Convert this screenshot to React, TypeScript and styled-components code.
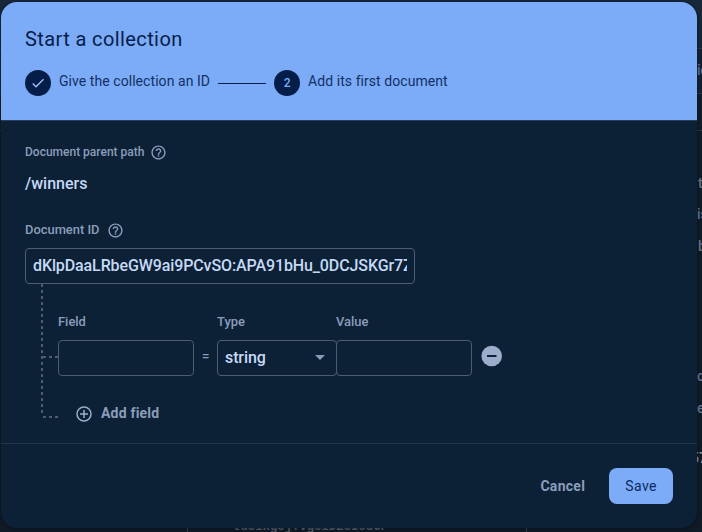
import React from "react";
import styled, { createGlobalStyle } from "styled-components";

const GlobalStyle = createGlobalStyle`
  * { box-sizing: border-box; }
  body { margin: 0; overflow: hidden; background: #101a28; font-family: Roboto, sans-serif; }
  button, input { font-family: inherit; }
`;

const Page = styled.div`
  position: relative;
  width: 702px;
  height: 532px;
  overflow: hidden;
  background: #101b28;
`;

const Backdrop = styled.div`
  display: flex;
  flex-direction: column;
  height: 532px;
`;

const Band = styled.div<{ $height: number; $tone: string }>`
  flex: none;
  height: ${(p) => p.$height}px;
  background: ${(p) => p.$tone};
  border-bottom: 1px solid #2c3744;
`;

const Listing = styled.div`
  flex: 1;
  display: grid;
  grid-template-columns: 188px 339px 1fr;
`;

const Column = styled.div`
  display: flex;
  flex-direction: column;
  justify-content: flex-end;
  border-right: 1px solid #37414d;
  &:last-child { border: 0; }
`;

const Entry = styled.div`
  margin-bottom: -2px;
  padding-left: 45px;
  font: 700 12.3px/14px "Liberation Mono", monospace;
  color: #566170;
  white-space: nowrap;
`;

const Peek = styled.span<{ $x: number; $y: number; $color?: string }>`
  position: absolute;
  left: ${(p) => p.$x}px;
  top: ${(p) => p.$y}px;
  font-size: 14px;
  font-weight: 500;
  line-height: 20px;
  white-space: nowrap;
  color: ${(p) => p.$color ?? "#62788f"};
`;

const Dialog = styled.section`
  position: absolute;
  left: 1px;
  top: 2px;
  width: 696px;
  height: 526px;
  display: flex;
  flex-direction: column;
  border-radius: 16px;
  overflow: hidden;
  background: #0c2135;
  color: #c6d9f5;
  box-shadow: 0 1px 5px rgba(0, 0, 0, 0.4);
`;

const Header = styled.header`
  flex: none;
  height: 119px;
  padding: 25px 24px 0;
  background: #7cabf8;
  border-bottom: 1px solid #263e5b;
  color: #041e49;
`;

const Title = styled.h2`
  margin: 0;
  font: 400 20px/24px Roboto, sans-serif;
  letter-spacing: 0.4px;
`;

const Steps = styled.div`
  display: flex;
  align-items: center;
  margin-top: 19px;
  height: 26px;
`;

const StepMark = styled.span`
  display: flex;
  align-items: center;
  justify-content: center;
  width: 26px;
  height: 26px;
  border-radius: 50%;
  background: #041e49;
  color: #7cabf8;
  font-size: 12px;
  font-weight: 500;
`;

const StepLabel = styled.span`
  margin: -5px 8px 0;
  font-size: 14px;
  line-height: 20px;
  letter-spacing: 0.06px;
  color: #123163;
`;

const StepLine = styled.span`
  width: 48px;
  height: 1px;
  margin-right: 8px;
  background: #041e49;
`;

const Body = styled.div`
  flex: none;
  height: 322px;
  padding: 21px 24px 0;
`;

const Label = styled.div<{ $size?: number }>`
  display: flex;
  align-items: center;
  height: 20px;
  gap: 7px;
  padding-bottom: 2px;
  font-size: ${(p) => p.$size ?? 12.9}px;
  font-weight: 500;
  color: #8b9dbb;

  svg { position: relative; top: 1px; }
`;

const PathLabel = styled(Label)`
  gap: 6px;
  padding-bottom: 0;

  svg { top: 0; }
`;

const PathValue = styled.div`
  margin: 12px 0 26px;
  font-size: 16px;
  font-weight: 500;
  line-height: 20px;
`;

const TextInput = styled.input<{ $width: number }>`
  display: block;
  width: ${(p) => p.$width}px;
  height: 36px;
  padding: 0 7px 2px;
  border: 1px solid #4b5c74;
  border-radius: 4px;
  outline: 0;
  background: transparent;
  color: #c6d9f5;
  font-size: 16px;
  font-weight: 500;
  letter-spacing: -0.11px;
`;

const IdInput = styled(TextInput)`
  margin-top: 8px;
`;

const Tree = styled.div`
  display: grid;
  grid-template-columns: 33px 1fr;
  height: 134px;
`;

const Branch = styled.svg`
  display: block;
  width: 33px;
  height: 136px;
`;

const FieldRow = styled.div`
  display: grid;
  grid-template-columns: 136px 23px 119px 136px 1fr;
  grid-template-rows: 20px 36px;
  row-gap: 8px;
  padding-top: 28px;
`;

const Equals = styled.span`
  display: flex;
  align-items: center;
  justify-content: center;
  padding-bottom: 4px;
  font-size: 14px;
  color: #8b9dbb;
`;

const Select = styled.button`
  display: flex;
  align-items: center;
  justify-content: space-between;
  width: 120px;
  height: 36px;
  padding: 0 10px 2px 7px;
  border: 1px solid #4b5c74;
  border-radius: 4px;
  background: transparent;
  color: #c6d9f5;
  font-size: 16px;
  font-weight: 500;
  letter-spacing: -0.1px;
`;

const RemoveButton = styled.button`
  display: flex;
  align-items: center;
  height: 32px;
  padding: 0 0 0 7px;
  border: 0;
  background: transparent;
`;

const AddButton = styled.button`
  display: flex;
  align-items: center;
  gap: 8px;
  height: 24px;
  margin-top: 25px;
  padding: 0 0 0 17px;
  border: 0;
  background: transparent;
  color: #8b9dbb;
  font-size: 14px;
  font-weight: 700;
  letter-spacing: 0.2px;

  svg { position: relative; top: 1px; }
`;

const Footer = styled.footer`
  flex: 1;
  display: flex;
  justify-content: flex-end;
  align-items: center;
  gap: 8px;
  padding: 0 24px;
  border-top: 1px solid #1e344a;
`;

const Action = styled.button<{ $primary?: boolean }>`
  height: 36px;
  padding: 0 16px;
  border: 0;
  border-radius: 8px;
  background: ${(p) => (p.$primary ? "#7cabf8" : "transparent")};
  color: ${(p) => (p.$primary ? "#0b2a5c" : "#8b9dbb")};
  font-size: 14px;
  font-weight: ${(p) => (p.$primary ? 400 : 700)};
  letter-spacing: ${(p) => (p.$primary ? 0.45 : 0.3)}px;
`;

const HelpIcon = () => (
  <svg width="17" height="17" viewBox="0 0 24 24" fill="#8b9dbb">
    <path d="M11 18h2v-2h-2v2zm1-16C6.48 2 2 6.48 2 12s4.480 10 10 10 10-4.480 10-10S17.520 2 12 2zm0 18c-4.410 0-8-3.590-8-8s3.590-8 8-8 8 3.590 8 8-3.590 8-8 8zm0-14c-2.210 0-4 1.790-4 4h2c0-1.100.9-2 2-2s2 .9 2 2c0 2-3 1.750-3 5h2c0-2.250 3-2.500 3-5 0-2.210-1.790-4-4-4z" />
  </svg>
);

const peeks: { x: number; y: number; text: string; color?: string }[] = [
  { x: 697, y: 60, text: "ic" },
  { x: 698, y: 173, text: "t" },
  { x: 697, y: 204, text: "is" },
  { x: 698, y: 236, text: "b" },
  { x: 697, y: 366, text: "c" },
  { x: 697, y: 398, text: "e" },
  { x: 691, y: 448, text: "57", color: "#8594aa" },
];

export default function App() {
  return (
    <Page>
      <GlobalStyle />
      <Backdrop>
        <Band $height={49} $tone="#172839" />
        <Band $height={45} $tone="#142333" />
        <Band $height={37} $tone="#111e2b" />
        <Listing>
          <Column />
          <Column>
            <Entry>tdoikgoj.vgoiDZoIodGF</Entry>
          </Column>
          <Column />
        </Listing>
      </Backdrop>
      {peeks.map((p) => (
        <Peek key={p.y} $x={p.x} $y={p.y} $color={p.color}>
          {p.text}
        </Peek>
      ))}
      <Dialog>
        <Header>
          <Title>Start a collection</Title>
          <Steps>
            <StepMark>
              <svg width="16" height="16" viewBox="0 0 24 24" fill="#9dc1fb">
                <path d="M9 16.170L4.830 12l-1.420 1.410L9 19 21 7l-1.410-1.410z" />
              </svg>
            </StepMark>
            <StepLabel>Give the collection an ID</StepLabel>
            <StepLine />
            <StepMark>2</StepMark>
            <StepLabel>Add its first document</StepLabel>
          </Steps>
        </Header>
        <Body>
          <PathLabel $size={12}>
            Document parent path <HelpIcon />
          </PathLabel>
          <PathValue>/winners</PathValue>
          <Label>
            Document ID <HelpIcon />
          </Label>
          <IdInput $width={390} defaultValue="dKlpDaaLRbeGW9ai9PCvSO:APA91bHu_0DCJSKGr7Z" />
          <Tree>
            <Branch viewBox="0 0 33 136" fill="none" stroke="#4b5c74" strokeWidth="2" strokeDasharray="3 3">
              <path d="M17 0V130" />
              <path d="M18 73H33" />
              <path d="M18 133H33" />
            </Branch>
            <div>
              <FieldRow>
                <Label>Field</Label>
                <span />
                <Label>Type</Label>
                <Label>Value</Label>
                <span />
                <TextInput $width={136} />
                <Equals>=</Equals>
                <Select>
                  string
                  <svg width="12" height="6" viewBox="0 0 12 6" fill="#8b9dbb">
                    <path d="M1 1h10L6 6z" />
                  </svg>
                </Select>
                <TextInput $width={136} />
                <RemoveButton aria-label="Remove field">
                  <svg width="24" height="24" viewBox="0 0 24 24">
                    <circle cx="12.700" cy="12" r="10.300" fill="#9badca" />
                    <path d="M8 11h9.500v2H8z" fill="#0c2135" />
                  </svg>
                </RemoveButton>
              </FieldRow>
              <AddButton>
                <svg width="18" height="18" viewBox="0 0 18 18" fill="none" stroke="#9badca" strokeWidth="1.500">
                  <circle cx="9" cy="9" r="7" />
                  <path d="M9 5v8M5 9h8" />
                </svg>
                Add field
              </AddButton>
            </div>
          </Tree>
        </Body>
        <Footer>
          <Action>Cancel</Action>
          <Action $primary>Save</Action>
        </Footer>
      </Dialog>
    </Page>
  );
}
